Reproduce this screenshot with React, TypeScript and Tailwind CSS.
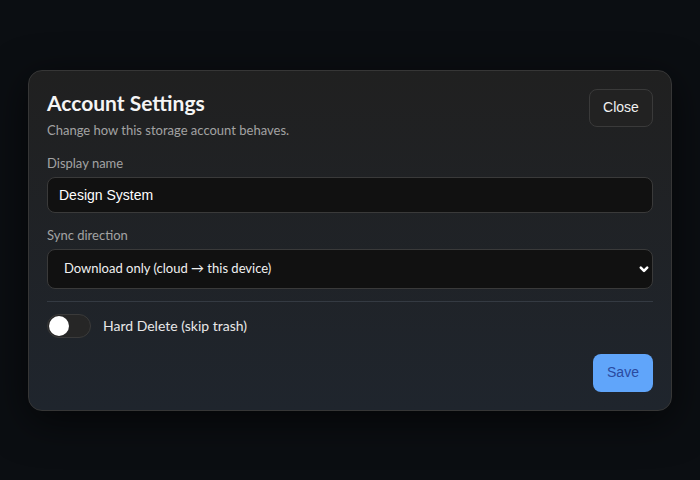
import { useState } from "react";

function Toggle({ on, onChange }: { on: boolean; onChange: (v: boolean) => void }) {
    return (
        <button
            type="button"
            role="switch"
            aria-checked={on}
            onClick={() => onChange(!on)}
            className={
                "relative h-6 w-11 shrink-0 rounded-full border border-[#3a3a3a] " +
                (on ? "bg-[#60a5fa]" : "bg-[#262626]")
            }
        >
            <span
                className={
                    "absolute top-[1px] h-5 w-5 rounded-full bg-white " +
                    (on ? "left-[21px]" : "left-[1px]")
                }
            />
        </button>
    );
}

export default function App() {
    const [name, setName] = useState("Design System");
    const [sync, setSync] = useState("down");
    const [hardDelete, setHardDelete] = useState(false);

    return (
        <div className="flex min-h-screen items-center justify-center bg-[#0b0e12] font-['Lato',sans-serif]">
            <div className="w-[644px] rounded-[14px] border border-[#363636] bg-gradient-to-b from-[#202020] to-[#1f252d] px-[18px] pt-[18px] pb-[18px] shadow-[0_10px_40px_rgba(0,0,0,0.6)]">
                <div className="flex items-start justify-between">
                    <div>
                        <h2 className="text-[21px] leading-[28px] font-bold text-[#f5f5f5]">
                            Account Settings
                        </h2>
                        <p className="mt-1 text-[13px] leading-[18px] text-[#a3a3a3]">
                            Change how this storage account behaves.
                        </p>
                    </div>
                    <button
                        type="button"
                        className="h-[38px] w-[64px] rounded-lg border border-[#3a3a3a] bg-[#222222] font-['Liberation_Sans',Arial,sans-serif] text-[14px] text-[#f0f0f0]"
                    >
                        Close
                    </button>
                </div>

                <label className="mt-[15px] block text-[13px] leading-[18px] text-[#a3a3a3]">
                    Display name
                </label>
                <input
                    value={name}
                    onChange={(e) => setName(e.target.value)}
                    className="mt-[5px] block h-9 w-full rounded-lg border border-[#3a3a3a] bg-[#111111] px-[11px] font-['Liberation_Sans',Arial,sans-serif] text-[14px] text-white outline-none"
                />

                <label className="mt-[13px] block text-[13px] leading-[18px] text-[#a3a3a3]">
                    Sync direction
                </label>
                <div className="relative mt-[5px]">
                    <select
                        value={sync}
                        onChange={(e) => setSync(e.target.value)}
                        className="block h-10 w-full appearance-none rounded-lg border border-[#3a3a3a] bg-[#111111] pl-4 pr-8 text-[13px] text-[#f0f0f0] outline-none"
                    >
                        <option value="down">Download only (cloud → this device)</option>
                        <option value="up">Upload only (this device → cloud)</option>
                        <option value="both">Two-way sync</option>
                    </select>
                    <svg
                        className="pointer-events-none absolute right-[3px] top-1/2 h-3 w-3 -translate-y-1/2"
                        viewBox="0 0 12 12"
                        fill="none"
                        stroke="white"
                        strokeWidth="2.6"
                        strokeLinecap="round"
                        strokeLinejoin="round"
                    >
                        <path d="M2.8 4.6 6 7.8l3.2-3.2" />
                    </svg>
                </div>

                <div className="mt-3 h-px bg-[#343a42]" />

                <div className="mt-3 flex items-center gap-3">
                    <Toggle on={hardDelete} onChange={setHardDelete} />
                    <span className="text-[14px] text-[#e8e8e8]">Hard Delete (skip trash)</span>
                </div>

                <div className="mt-4 flex justify-end">
                    <button
                        type="button"
                        className="h-[38px] w-[60px] rounded-lg bg-[#60a5fa] font-['Liberation_Sans',Arial,sans-serif] text-[14px] text-[#2a4aa0]"
                    >
                        Save
                    </button>
                </div>
            </div>
        </div>
    );
}
